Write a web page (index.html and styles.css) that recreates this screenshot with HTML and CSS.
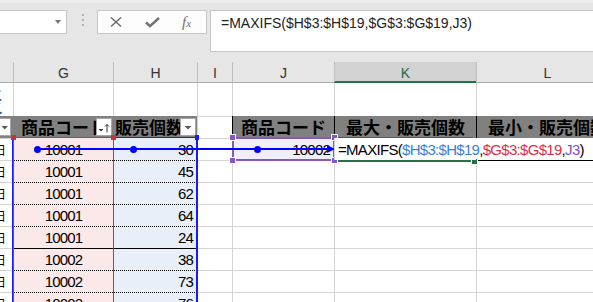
FILE: index.html
```html
<!doctype html>
<html>
<head>
<meta charset="utf-8">
<title>MAXIFS</title>
<link rel="stylesheet" href="styles.css">
</head>
<body>
<div class="topbar">
	<div class="namebox"><span class="caret"></span></div>
	<div class="grip"><i></i><i></i><i></i></div>
	<div class="fxbox">
		<svg class="ico-x" width="14" height="12" viewBox="0 0 14 12"><path d="M2 1.5L12 10.5M12 1.5L2 10.5" stroke="#6f6f6f" stroke-width="1.6" fill="none"/></svg>
		<svg class="ico-ok" width="15" height="11" viewBox="0 0 15 11"><path d="M1 5.5L5 9.2L14 1" stroke="#6f6f6f" stroke-width="2.4" fill="none"/></svg>
		<span class="fx">f<span>x</span></span>
	</div>
	<div class="formula">=MAXIFS($H$3:$H$19,$G$3:$G$19,J3)</div>
</div>

<div class="sheet">
	<div class="grid">
		<!-- column letters -->
		<div class="ch first"></div>
		<div class="ch">G</div>
		<div class="ch">H</div>
		<div class="ch">I</div>
		<div class="ch">J</div>
		<div class="ch on">K</div>
		<div class="ch">L</div>

		<!-- row 1 -->
		<div class="r1 fc"><span class="ttl">表</span></div>
		<div class="r1"></div>
		<div class="r1"></div>
		<div class="r1"></div>
		<div class="r1"></div>
		<div class="r1"></div>
		<div class="r1"></div>

		<!-- table headers -->
		<div class="hd fc"><span class="btn small"><svg width="10" height="16" viewBox="0 0 10 16"><polygon points="1.5,7 8,7 4.75,10.5" fill="#595959"/></svg></span></div>
		<div class="hd g0"><span class="t">商品コード</span><span class="btn"><svg width="14" height="16" viewBox="0 0 14 16"><polygon points="1.5,10 6.5,10 4,12.5" fill="#333"/><path d="M10 13.5V5.5M8 7.5L10 5.5L12 7.5" stroke="#333" stroke-width="1" fill="none"/></svg></span></div>
		<div class="hd h0"><span class="t">販売個数</span><span class="btn"><svg width="14" height="16" viewBox="0 0 14 16"><polygon points="3.5,7 10.5,7 7,10.5" fill="#595959"/></svg></span></div>
		<div class="gap"></div>
		<div class="hd mid">商品コード</div>
		<div class="hd mid">最大・販売個数</div>
		<div class="hd mid">最小・販売個数</div>

		<!-- data -->
		<div class="fc day"><span>日</span></div>
		<div class="g top">10001</div>
		<div class="h top">30</div>
		<div class="gap"></div>
		<div class="num sel">10002</div>
		<div class="edit">=MAXIFS(<span class="rb">$H$3:$H$19</span>,<span class="rr">$G$3:$G$19</span>,<span class="rp">J3</span>)<span class="cursor"></span></div>
		<div class="after"></div>

		<div class="fc day"><span>日</span></div>
		<div class="g">10001</div>
		<div class="h">45</div>
		<div></div><div></div><div></div><div></div>

		<div class="fc day"><span>日</span></div>
		<div class="g">10001</div>
		<div class="h">62</div>
		<div></div><div></div><div></div><div></div>

		<div class="fc day"><span>日</span></div>
		<div class="g">10001</div>
		<div class="h">64</div>
		<div></div><div></div><div></div><div></div>

		<div class="fc day"><span>日</span></div>
		<div class="g">10001</div>
		<div class="h">24</div>
		<div></div><div></div><div></div><div></div>

		<div class="fc day"><span>日</span></div>
		<div class="g sep">10002</div>
		<div class="h sep">38</div>
		<div></div><div></div><div></div><div></div>

		<div class="fc day"><span>日</span></div>
		<div class="g">10002</div>
		<div class="h">73</div>
		<div></div><div></div><div></div><div></div>

		<div class="fc day"><span>日</span></div>
		<div class="g">10002</div>
		<div class="h">76</div>
		<div></div><div></div><div></div><div></div>
	</div>

	<!-- range highlights drawn over the cells -->
	<div class="rng-edge"></div>
	<div class="rng-blue"></div>
	<div class="rng-red"></div>
	<div class="rng-purple"></div>
	<div class="act-top"></div>
	<div class="act-bottom"></div>
	<div class="act-tail"></div>
	<span class="hdl red" style="left:11px"></span>
	<span class="hdl red" style="left:111px"></span>
	<span class="hdl blue" style="left:195px"></span>
	<span class="hdl purple" style="left:230px;top:73px"></span>
	<span class="hdl purple" style="left:332px;top:73px"></span>
	<span class="hdl purple" style="left:230px;top:96px"></span>
	<span class="hdl purple" style="left:332px;top:96px"></span>
	<span class="hdl green"></span>

	<!-- precedent tracer -->
	<div class="tracer"></div>
	<span class="dot" style="left:34px"></span>
	<span class="dot" style="left:130px"></span>
	<span class="dot" style="left:254px"></span>
	<span class="arrow"></span>
</div>
</body>
</html>
```

FILE: styles.css
```css
*{margin:0; padding:0;}
html,body{width:593px; height:302px; overflow:hidden; background:#fff;}
body{font-family:"Liberation Sans", Arial, sans-serif; color:#000;}

/* formula bar */
.topbar{height:62px; box-sizing:border-box; padding-top:10px; display:flex; align-items:flex-start; background:linear-gradient(#ececec 0, #ececec 3px, #e6e6e6 3px);}
.namebox{width:68px; height:24px; margin-left:-1px; box-sizing:border-box; border:1px solid #c6c6c6; background:#fff; display:flex; align-items:center; justify-content:flex-end; padding-right:5px;}
.caret{width:0; height:0; border-left:3.5px solid transparent; border-right:3.5px solid transparent; border-top:4px solid #777;}
.grip{margin-left:15px; width:2px; padding-top:4px;}
.grip i{display:block; width:2px; height:2px; background:#b3b3b3; margin-bottom:3px;}
.fxbox{margin-left:13px; width:110px; height:24px; box-sizing:border-box; border:1px solid #c6c6c6; background:#fdfdfd; display:flex; align-items:center; padding-left:11px;}
.ico-ok{margin-left:22px;}
.fx{margin-left:22px; font-family:"Liberation Serif", "Times New Roman", serif; font-style:italic; font-size:15px; color:#6f6f6f; line-height:16px;}
.fx span{font-size:11px;}
.formula{flex:1; height:42px; margin-left:3px; margin-right:-1px; box-sizing:border-box; border:1px solid #c6c6c6; background:#fff; padding:4px 10px; font-size:14px; line-height:16px; color:#222; white-space:nowrap;}

/* sheet */
.sheet{position:relative;}
.grid{display:grid; grid-template-columns:13px 100px 84px 35px 102px 142px 142px; grid-template-rows:21px 33px 22px repeat(8, 22px);}
.grid > div{box-sizing:border-box; border-left:1px solid #d4d4d4; border-top:1px solid #d4d4d4; overflow:hidden; white-space:nowrap; font-size:15px; letter-spacing:-0.8px; line-height:17px; display:flex; align-items:flex-end; padding-bottom:2px;}
.grid > div.fc{border-left:none;}

.grid > .ch{background:#e6e6e6; border-top:none; border-left-color:#bdbdbd; border-bottom:1px solid #ababab; justify-content:center; align-items:flex-start; padding:2px 0 0; font-size:14px; line-height:18px; letter-spacing:0; color:#333;}
.grid > .ch.first{border-left:none;}
.grid > .ch.on{background:#d2d2d2; border-bottom:2px solid #217346; color:#1e6b41;}

.grid > .r1{border-top:none;}
.grid > .r1.fc{align-items:center; justify-content:flex-end; padding:0 10px 0 0;}
.ttl{font-family:"Noto Sans CJK JP", sans-serif; font-size:28px; line-height:30px; color:#2b5ba8; letter-spacing:0;}

.grid > .hd{background:#808080; border-top:none; border-left:none; align-items:center; padding:0; font-family:"Noto Sans CJK JP", sans-serif; font-weight:bold; font-size:17px; line-height:22px; letter-spacing:0;}
.grid > .hd.mid{justify-content:center; border-left:1px solid #000;}
.hd .t{flex:1; min-width:0; overflow:hidden;}
.g0 .t{padding-left:8px;}
.h0 .t{padding-left:2px;}
.btn{width:16px; height:18px; box-sizing:border-box; border:1px solid #a6a6a6; background:#fff; margin-right:1px; display:flex; align-items:center; justify-content:center;}
.btn.small{width:12px; margin-left:-1px;}
.grid > .gap{border-top:1px solid #d4d4d4;}

.grid > .day{align-items:center; justify-content:flex-end; padding:0 7px 0 0;}
.day span{font-family:"Noto Sans CJK JP", sans-serif; font-size:12px; line-height:14px; letter-spacing:0;}

.grid > .g{background:#fbe9e9; border-top:1px dotted #000; justify-content:center;}
.grid > .h{background:#e8eff9; border-top:1px dotted #000; justify-content:flex-end; padding-right:4px;}
.grid > .sep{border-top-style:solid;}
.grid > .top{border-top:none;}
.grid > .num{justify-content:flex-end; padding-right:4px;}
.grid > .sel{background:#f0eef8; border-top:none;}
.grid > .edit{border-top:none; overflow:visible; position:relative; z-index:1; padding-left:3px; background:#fff; letter-spacing:-0.7px;}
.grid > .after{border-top:none; border-left:none;}
.rb{color:#3a7fd5;}
.rr{color:#dc2f4b;}
.rp{color:#8050c4;}
.cursor{display:inline-block; width:1px; height:16px; background:#000; margin-left:3px; margin-bottom:-2px;}

/* overlays */
.rng-red{position:absolute; left:13px; top:75px; width:101px; height:200px; box-sizing:border-box; border:1px solid #cf2f3a; border-bottom:none;}
.rng-blue{position:absolute; left:113px; top:75px; width:85px; height:200px; box-sizing:border-box; border-top:1px solid #1a1aff; border-right:2px solid #1a1aff;}
.rng-edge{position:absolute; left:12px; top:75px; width:1px; height:200px; background:#1a1aff;}
.rng-purple{position:absolute; left:232px; top:75px; width:103px; height:24px; box-sizing:border-box; border:2px solid #8158c4;}
.act-top{position:absolute; left:338px; top:75px; width:135px; height:2px; background:#217346;}
.act-bottom{position:absolute; left:338px; top:98px; width:135px; height:2px; background:#217346;}
.act-tail{position:absolute; left:478px; top:98px; width:120px; height:1px; background:#000;}
.hdl{position:absolute; top:73px; width:5px; height:5px;}
.hdl.red{background:#cf2f3a;}
.hdl.blue{background:#1a1aff; width:4px;}
.hdl.purple{background:#8158c4; outline:1px solid #fff;}
.hdl.green{background:#217346; left:472px; top:97px; outline:1px solid #fff;}

.tracer{position:absolute; left:37px; top:86px; width:292px; height:2px; background:#0000ff;}
.dot{position:absolute; top:84px; width:7px; height:7px; border-radius:50%; background:#0000ff;}
.arrow{position:absolute; left:327px; top:83px; width:0; height:0; border-top:4px solid transparent; border-bottom:4px solid transparent; border-left:8px solid #0000ff;}
```
